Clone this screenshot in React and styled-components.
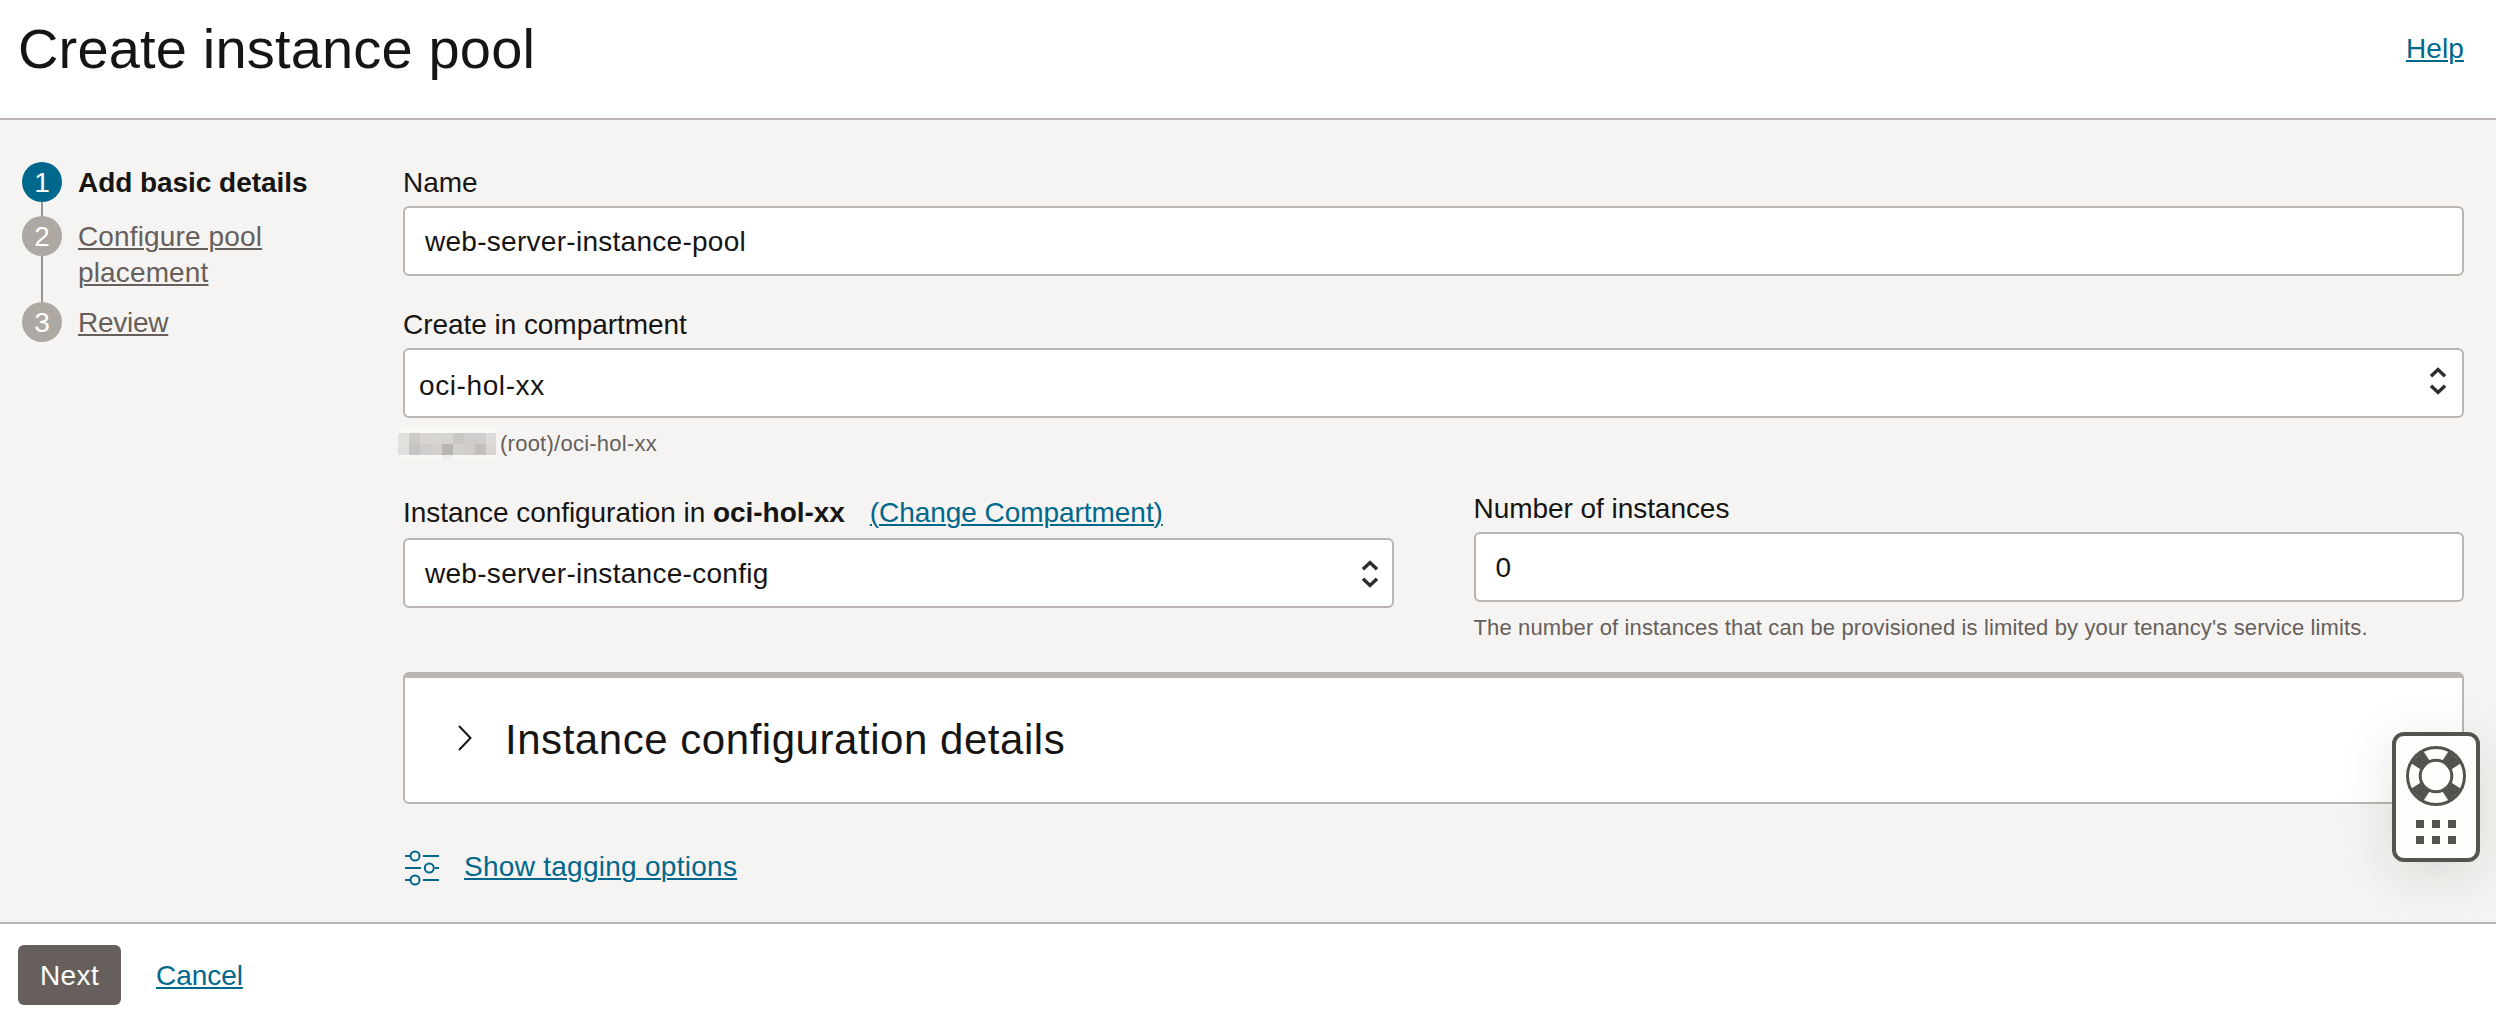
import React from 'react';
import styled, { createGlobalStyle, ThemeProvider } from 'styled-components';

const theme = {
  text: '#161513',
  muted: '#665f5b',
  link: '#00688c',
  border: '#bbb5b1',
  canvas: '#f5f4f2',
  surface: '#ffffff',
  stepIdle: '#ada8a2',
  support: '#55534e',
};

const GlobalStyle = createGlobalStyle`
  *, *::before, *::after { box-sizing: border-box; }
  html, body { margin: 0; padding: 0; }
  body {
    background: #ffffff;
    color: ${theme.text};
    font-family: "Liberation Sans", Arial, Helvetica, sans-serif;
    font-size: 28px;
    line-height: 36px;
    overflow: hidden;
  }
`;

const Page = styled.div`
  display: flex;
  flex-direction: column;
  height: 1022px;
  width: 100%;
`;

const Link = styled.a`
  color: ${({ theme, $muted }) => ($muted ? theme.muted : theme.link)};
  letter-spacing: ${({ $tracking }) => $tracking || '0'};
  text-decoration: underline;
  text-decoration-thickness: 2px;
  text-underline-offset: 2px;
  cursor: pointer;
`;

const Header = styled.header`
  display: flex;
  justify-content: space-between;
  height: 120px;
  padding: 18px 32px 0 18px;
  border-bottom: 2px solid ${({ theme }) => theme.border};
`;

const Title = styled.h1`
  margin: 1px 0 0;
  font-size: 56px;
  font-weight: 400;
  letter-spacing: 0.17px;
  line-height: 60px;
`;

const HelpSlot = styled.div`
  padding-top: 13px;
`;

const Body = styled.div`
  display: flex;
  height: 802px;
  padding: 42px 32px 0 22px;
  background: ${({ theme }) => theme.canvas};
`;

const Steps = styled.ol`
  flex: none;
  width: 381px;
  margin: 0;
  padding: 0;
  list-style: none;
`;

const Step = styled.li`
  display: flex;
  min-height: 54px;
`;

const Rail = styled.div`
  display: flex;
  flex-direction: column;
  align-items: center;
  width: 40px;
`;

const Bullet = styled.span`
  flex: none;
  width: 40px;
  height: 40px;
  border-radius: 50%;
  background: ${({ theme, $active }) => ($active ? theme.link : theme.stepIdle)};
  color: #ffffff;
  line-height: 42px;
  text-align: center;
`;

const Connector = styled.span`
  flex: 1;
  width: 2px;
  background: #9a9692;
`;

const StepLabel = styled.div`
  width: 250px;
  padding: 3px 0 11px;
  margin-left: 16px;
  font-weight: ${({ $active }) => ($active ? 700 : 400)};
  letter-spacing: ${({ $active }) => ($active ? '-0.05px' : '0')};
`;

const Form = styled.main`
  flex: 1;
  padding-top: 3px;
`;

const Field = styled.div`
  margin-bottom: ${({ $gap }) => $gap || 0}px;
`;

const Label = styled.div`
  margin-bottom: ${({ $space }) => $space || 5}px;
  letter-spacing: -0.05px;
  white-space: pre;
`;

const LabelLink = styled.span`
  margin-left: 25px;
`;

const TextInput = styled.input`
  display: block;
  width: 100%;
  height: 70px;
  padding: 2px 20px 0;
  border: 2px solid ${({ theme }) => theme.border};
  border-radius: 6px;
  background: ${({ theme }) => theme.surface};
  color: inherit;
  font: inherit;
  letter-spacing: ${({ $tracking }) => $tracking || '0'};
  outline: none;
`;

const SelectBox = styled.div`
  display: flex;
  align-items: flex-start;
  justify-content: space-between;
  height: 70px;
  padding: ${({ $padding }) => $padding};
  border: 2px solid ${({ theme }) => theme.border};
  border-radius: 6px;
  background: ${({ theme }) => theme.surface};
  letter-spacing: ${({ $tracking }) => $tracking || '0'};
`;

const Arrows = styled.svg`
  flex: none;
  width: 18px;
  height: 30px;
  margin-top: ${({ $top }) => $top}px;
`;

const Hint = styled.div`
  display: flex;
  align-items: flex-start;
  margin-top: 12px;
  color: ${({ theme }) => theme.muted};
  font-size: 22px;
  line-height: 28px;
  letter-spacing: ${({ $tracking }) => $tracking || '0'};
  white-space: nowrap;
`;

const Redaction = styled.div`
  display: grid;
  grid-template-columns: repeat(8, 11px) 10px;
  grid-template-rows: 6px 11px 11px 4px;
  margin: -3px 4px -2px -5px;
`;

const Tile = styled.span`
  background: ${({ $tone }) => $tone};
`;

const Columns = styled.div`
  display: grid;
  grid-template-columns: 1fr 1fr;
  column-gap: 80px;
  margin-top: 33px;
`;

const ConfigColumn = styled.div`
  padding-top: 4px;
`;

const Panel = styled.section`
  display: flex;
  align-items: center;
  height: 132px;
  margin-top: 30px;
  padding: 0 0 0 54px;
  border: 2px solid ${({ theme }) => theme.border};
  border-top-width: 6px;
  border-radius: 6px;
  background: ${({ theme }) => theme.surface};
`;

const Chevron = styled.svg`
  width: 14px;
  height: 26px;
  margin: -4px 32px 0 -1px;
`;

const PanelTitle = styled.h2`
  margin: 0 0 0 1px;
  font-size: 42px;
  font-weight: 400;
  letter-spacing: 0.54px;
  line-height: 52px;
`;

const Tagging = styled.div`
  display: flex;
  align-items: flex-start;
  margin-top: 45px;
`;

const SlidersIcon = styled.svg`
  width: 36px;
  height: 36px;
  margin: 1px 24px 0 1px;
`;

const Footer = styled.footer`
  display: flex;
  align-items: flex-start;
  height: 100px;
  padding: 21px 18px 0;
  border-top: 2px solid ${({ theme }) => theme.border};
`;

const NextButton = styled.button`
  width: 103px;
  height: 60px;
  margin-right: 35px;
  padding: 2px 0 0;
  border: 0;
  border-radius: 6px;
  background: ${({ theme }) => theme.muted};
  color: #ffffff;
  font: inherit;
  letter-spacing: 0.4px;
`;

const CancelSlot = styled.div`
  padding-top: 13px;
`;

const SupportWidget = styled.aside`
  position: fixed;
  top: 732px;
  right: 16px;
  display: flex;
  flex-direction: column;
  align-items: center;
  width: 88px;
  height: 130px;
  padding-top: 10px;
  border: 4px solid ${({ theme }) => theme.support};
  border-radius: 12px;
  background: #fdfdfb;
  box-shadow: 0 12px 56px rgba(22, 21, 19, 0.12);
`;

const Lifebuoy = styled.svg`
  flex: none;
  width: 60px;
  height: 60px;
`;

const Dots = styled.div`
  display: grid;
  grid-template-columns: repeat(3, 8px);
  grid-auto-rows: 8px;
  gap: 8px;
  margin-top: 14px;
`;

const Dot = styled.span`
  background: ${({ theme }) => theme.support};
`;

const tiles = [
  ...Array(9).fill('#f8f8f5'),
  '#e2e1dd', '#cdc9c6', '#d7d4d1', '#d8d6d2', '#d7d4d1', '#c8c7c3', '#cecdcb', '#cfcecc', '#dddcdb',
  '#dfdfdd', '#c6c4c2', '#cecdcb', '#d3d0ce', '#b9b5b3', '#d2d1cf', '#cfccca', '#c3bebb', '#d9d5d3',
  '#f8f8f5', '#f8f8f5', '#f8f8f5', '#f8f8f5', '#f0efed', '#f8f8f5', '#f8f8f5', '#f8f8f5', '#f8f8f5',
];

const steps = [
  { label: 'Add basic details', active: true },
  { label: 'Configure pool placement', tracking: '0.14px' },
  { label: 'Review', tracking: '-0.25px' },
];

function SelectArrows({ top }) {
  return (
    <Arrows $top={top} viewBox="0 0 18 30" fill="none" stroke="#2e2d2b" strokeWidth="3.4">
      <path d="M2 10.3 L9 3.5 L16 10.3" />
      <path d="M2 19.7 L9 26.5 L16 19.7" />
    </Arrows>
  );
}

function LifebuoyIcon() {
  return (
    <Lifebuoy viewBox="0 0 60 60">
      <circle cx="30" cy="30" r="28.5" fill="#fdfdfb" stroke={theme.support} strokeWidth="3" />
      <g fill={theme.support}>
        {[45, 135, 225, 315].map((angle) => (
          <path key={angle} d="M44 24 L57 21.3 V38.7 L44 36 Z" transform={`rotate(${angle} 30 30)`} />
        ))}
      </g>
      <circle cx="30" cy="30" r="15.8" fill="#fdfdfb" stroke={theme.support} strokeWidth="3" />
    </Lifebuoy>
  );
}

export default function App() {
  return (
    <ThemeProvider theme={theme}>
      <GlobalStyle />
      <Page>
        <Header>
          <Title>Create instance pool</Title>
          <HelpSlot>
            <Link $tracking="0.1px">Help</Link>
          </HelpSlot>
        </Header>
        <Body>
          <Steps>
            {steps.map((step, i) => (
              <Step key={step.label}>
                <Rail>
                  <Bullet $active={step.active}>{i + 1}</Bullet>
                  {i < steps.length - 1 && <Connector />}
                </Rail>
                <StepLabel $active={step.active}>
                  {step.active ? step.label : <Link $muted $tracking={step.tracking}>{step.label}</Link>}
                </StepLabel>
              </Step>
            ))}
          </Steps>
          <Form>
            <Field $gap={31}>
              <Label>Name</Label>
              <TextInput defaultValue="web-server-instance-pool" $tracking="0.28px" />
            </Field>
            <Field>
              <Label>Create in compartment</Label>
              <SelectBox $padding="18px 15px 0 14px" $tracking="0.6px">
                oci-hol-xx
                <SelectArrows top={-2} />
              </SelectBox>
              <Hint $tracking="0.25px">
                <Redaction>
                  {tiles.map((tone, i) => (
                    <Tile key={i} $tone={tone} />
                  ))}
                </Redaction>
                (root)/oci-hol-xx
              </Hint>
            </Field>
            <Columns>
              <ConfigColumn>
                <Label $space={7}>
                  Instance configuration in <b>oci-hol-xx</b>
                  <LabelLink>
                    <Link $tracking="-0.05px">(Change Compartment)</Link>
                  </LabelLink>
                </Label>
                <SelectBox $padding="16px 13px 0 20px" $tracking="0.29px">
                  web-server-instance-config
                  <SelectArrows top={3} />
                </SelectBox>
              </ConfigColumn>
              <Field>
                <Label>Number of instances</Label>
                <TextInput defaultValue="0" />
                <Hint $tracking="0.13px">
                  The number of instances that can be provisioned is limited by your tenancy's service limits.
                </Hint>
              </Field>
            </Columns>
            <Panel>
              <Chevron viewBox="0 0 14 26" fill="none" stroke={theme.text} strokeWidth="2">
                <path d="M1 1 L12.5 13 L1 25" />
              </Chevron>
              <PanelTitle>Instance configuration details</PanelTitle>
            </Panel>
            <Tagging>
              <SlidersIcon viewBox="0 0 36 36" fill="none" stroke={theme.link} strokeWidth="2">
                <path d="M1 6 H6 M19 6 H35 M1 18 H17 M31 18 H35 M1 30 H6 M19 30 H35" />
                <circle cx="11" cy="6" r="4.5" />
                <circle cx="25.3" cy="18" r="4.5" />
                <circle cx="11" cy="30" r="4.5" />
              </SlidersIcon>
              <Link $tracking="0.27px">Show tagging options</Link>
            </Tagging>
          </Form>
        </Body>
        <Footer>
          <NextButton>Next</NextButton>
          <CancelSlot>
            <Link $tracking="-0.05px">Cancel</Link>
          </CancelSlot>
        </Footer>
      </Page>
      <SupportWidget>
        <LifebuoyIcon />
        <Dots>
          {Array.from({ length: 6 }, (_, i) => (
            <Dot key={i} />
          ))}
        </Dots>
      </SupportWidget>
    </ThemeProvider>
  );
}
